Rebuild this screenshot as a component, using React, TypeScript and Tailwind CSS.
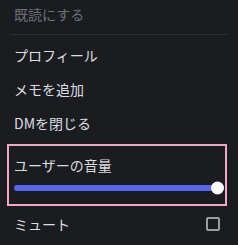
import { useState } from 'react'

// ─── User context menu (fragment) ────────────────────────────────────────────
function MenuItem({ label, dim = false }: { label: string; dim?: boolean }) {
  return (
    <div className={`flex h-[32px] items-center rounded-sm px-2 text-[14px] ${dim ? 'text-[#6d6f78]' : 'text-[#dbdee1]'}`}>
      {label}
    </div>
  )
}

export default function App() {
  const [volume] = useState(100)
  const [muted, setMuted] = useState(false)

  return (
    <div
      className="h-[245px] w-[238px] overflow-hidden bg-[#1b1c20] pl-[6px] pr-[10px]"
      style={{ fontFamily: '"Noto Sans CJK JP", "Noto Sans", sans-serif' }}
    >
      {/* Disabled item, cut off at the top */}
      <div className="flex h-[28px] items-center px-2 text-[14px] text-[#6d6f78]">既読にする</div>

      <div className="mb-[4px] ml-1 mt-[6px] h-px bg-[#2e2f35]" />

      <div className="flex flex-col gap-[2px]">
        <MenuItem label="プロフィール" />
        <MenuItem label="メモを追加" />
        <MenuItem label="DMを閉じる" />
      </div>

      {/* Volume slider, highlighted */}
      <div className="ml-[1px] mr-[1px] mt-[5px] h-[62px] border-2 border-[#f4a7c4] px-[5px] pt-[10px]">
        <div className="text-[14px] leading-[18px] text-[#dbdee1]">ユーザーの音量</div>
        <div className="relative mt-[11px] h-[6px] rounded-full bg-[#5865f2]" style={{ width: `${(volume / 100) * 203}px` }}>
          <div className="absolute -right-[7px] top-1/2 h-[13px] w-[13px] -translate-y-1/2 rounded-full bg-white" />
        </div>
      </div>

      <div
        className="mt-[2px] flex h-[32px] cursor-pointer items-center justify-between px-2 text-[14px] text-[#dbdee1]"
        onClick={() => setMuted(!muted)}
      >
        <span>ミュート</span>
        <span className={`h-[14px] w-[14px] rounded-[2px] border-2 border-[#9a9ca3] ${muted ? 'bg-[#5865f2]' : ''}`} />
      </div>
    </div>
  )
}
